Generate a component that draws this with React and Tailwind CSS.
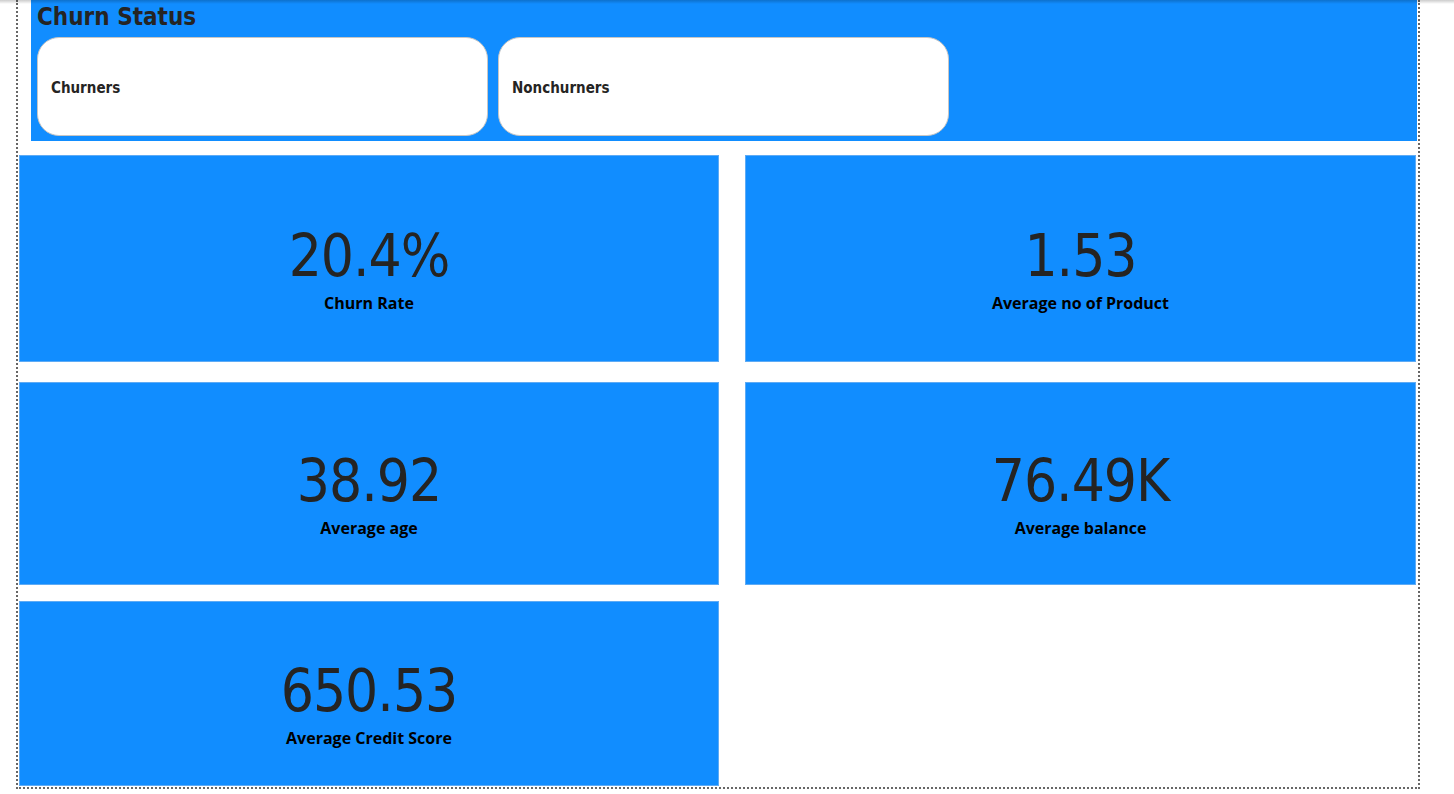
import React from "react";

const numFont = { fontFamily: '"DejaVu Sans Condensed", "Roboto", sans-serif' };
const lblFont = { fontFamily: '"Open Sans", "Noto Sans", sans-serif' };

function Card({ value, label, className }) {
  return (
    <div className={`bg-[#118dff] border border-[#5eabf5] flex flex-col items-center justify-center pt-[24px] ${className}`}>
      <div className="text-[58px] leading-[56px] tracking-[-1px] text-[#252423]" style={numFont}>{value}</div>
      <div className="text-[16px] leading-[20px] font-bold text-black mt-[9px]" style={lblFont}>{label}</div>
    </div>
  );
}

export default function App() {
  return (
    <div className="relative w-[1454px] h-[794px] bg-white overflow-hidden">
      <div className="ml-[16px] w-[1404px] h-[789px] border-2 border-t-0 border-dotted border-[#666666] flex flex-col">
        <div className="ml-[13px] mr-[1px] h-[141px] bg-[#118dff] flex flex-col">
          <div className="pl-[6px] pt-[1px] text-[24px] leading-[32px] font-bold text-[#252423]" style={numFont}>Churn Status</div>
          <div className="flex gap-[10px] pl-[6px] mt-[4px]">
            {["Churners", "Nonchurners"].map((t) => (
              <div key={t} className="w-[451px] h-[99px] bg-white rounded-[22px] border border-[#c8c6c4] flex items-center pl-[13px] pt-[4px]">
                <span className="text-[15px] font-bold text-[#252423]" style={numFont}>{t}</span>
              </div>
            ))}
          </div>
        </div>
        <div className="flex mt-[14px] h-[207px] pl-[1px] pr-[2px] gap-[26px]">
          <Card value="20.4%" label="Churn Rate" className="w-[700px]" />
          <Card value="1.53" label="Average no of Product" className="flex-1" />
        </div>
        <div className="flex mt-[20px] h-[203px] pl-[1px] pr-[2px] gap-[26px]">
          <Card value="38.92" label="Average age" className="w-[700px]" />
          <Card value="76.49K" label="Average balance" className="flex-1" />
        </div>
        <div className="flex mt-[16px] h-[185px] pl-[1px] pr-[2px] gap-[26px]">
          <Card value="650.53" label="Average Credit Score" className="w-[700px]" />
          <div className="flex-1" />
        </div>
      </div>
      <div className="absolute top-0 left-0 right-0 h-[4px] bg-gradient-to-b from-black/20 to-transparent" />
    </div>
  );
}
